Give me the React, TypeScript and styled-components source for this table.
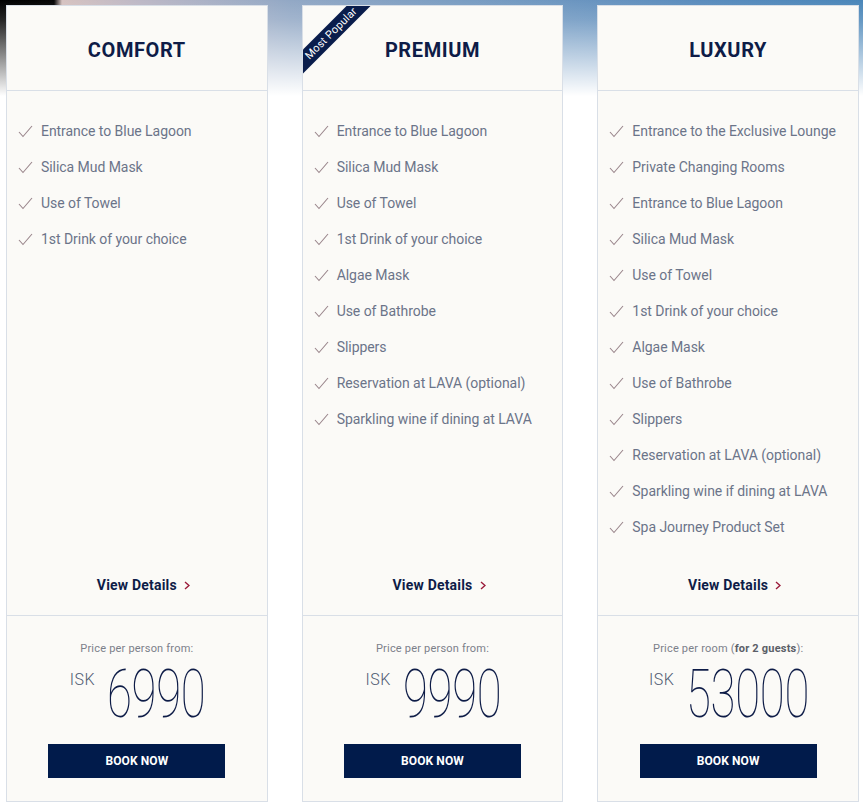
import React from 'react';
import styled, { createGlobalStyle } from 'styled-components';

const GlobalStyle = createGlobalStyle`
  html, body {
    margin: 0;
    padding: 0;
    background: #ffffff;
  }
  body {
    font-family: Roboto, 'Liberation Sans', sans-serif;
  }
`;

const Page = styled.div`
  width: 863px;
  height: 809px;
  box-sizing: border-box;
  padding: 5px 4px 0 6px;
  background-color: #ffffff;
  background-image:
    linear-gradient(to bottom, rgba(255, 255, 255, 0) 0px, rgba(255, 255, 255, 0.15) 20px, #ffffff 96px),
    linear-gradient(
      to right,
      #000000 0px,
      #050505 54px,
      #d6c2c0 62px,
      #bdb8c6 140px,
      #92a8c5 290px,
      #7299c1 520px,
      #5a8cbd 700px,
      #4a86b9 863px
    );
  background-size: 100% 100px, 100% 100px;
  background-repeat: no-repeat;
`;

const Grid = styled.div`
  display: grid;
  grid-template-columns: repeat(3, 1fr);
  column-gap: 34px;
  align-items: stretch;
`;

const Card = styled.div`
  position: relative;
  overflow: hidden;
  display: flex;
  flex-direction: column;
  background: #fbfaf7;
  border: 1px solid #d9dfe7;
`;

const Header = styled.div`
  height: 85px;
  box-sizing: border-box;
  padding-top: 4px;
  display: flex;
  align-items: center;
  justify-content: center;
  border-bottom: 1px solid #d9dfe7;
`;

const Title = styled.h2`
  margin: 0;
  font-family: Roboto, 'Liberation Sans', sans-serif;
  font-size: 20px;
  font-weight: 700;
  letter-spacing: 0.6px;
  color: #0e1c47;
`;

const Ribbon = styled.div`
  position: absolute;
  left: -32px;
  top: 19px;
  width: 120px;
  height: 17px;
  background: #0a1d4c;
  color: #ffffff;
  font-size: 11px;
  line-height: 17px;
  text-align: center;
  transform: rotate(-45deg);
  letter-spacing: 0.2px;
`;

const Body = styled.div`
  flex: 1;
  display: flex;
  flex-direction: column;
  border-bottom: 1px solid #d9dfe7;
`;

const FeatureList = styled.ul`
  flex: 1;
  list-style: none;
  margin: 0;
  padding: 22px 0 0 11px;
`;

const Feature = styled.li`
  display: flex;
  align-items: center;
  height: 36px;
  font-size: 14px;
  color: #6b7489;
  letter-spacing: -0.05px;
`;

const Check = styled.svg`
  width: 15px;
  height: 13px;
  margin-right: 8px;
  flex-shrink: 0;
`;

const DetailsRow = styled.div`
  height: 36px;
  margin: 22px 0 12px;
  display: flex;
  align-items: center;
  justify-content: center;
`;

const DetailsLink = styled.a`
  display: inline-flex;
  align-items: center;
  gap: 7px;
  font-size: 14px;
  font-weight: 700;
  color: #0e1c47;
  text-decoration: none;
  letter-spacing: 0.2px;
  cursor: pointer;
`;

const Chevron = styled.svg`
  width: 6px;
  height: 9px;
  margin-top: 1px;
  margin-right: -13px;
`;

const Footer = styled.div`
  height: 185px;
  box-sizing: border-box;
  padding: 26px 0 0;
  display: flex;
  flex-direction: column;
  align-items: center;
`;

const PriceLabel = styled.div`
  font-size: 11px;
  line-height: 14px;
  color: #7c808a;
  letter-spacing: 0.2px;

  b {
    font-weight: 700;
    color: #5b5f68;
  }
`;

const PriceRow = styled.div`
  margin-top: 4px;
  height: 66px;
  display: flex;
  align-items: flex-start;
  justify-content: center;
  gap: 12px;
`;

const Currency = styled.span`
  margin-top: 10px;
  font-size: 16px;
  font-weight: 300;
  color: #4f5a72;
  letter-spacing: 0.5px;
`;

const Amount = styled.span<{ $chars: number }>`
  display: inline-block;
  margin-top: 3px;
  font-size: 67px;
  line-height: 63px;
  font-weight: 100;
  color: #0e1c47;
  transform: scaleX(0.68);
  transform-origin: left center;
  margin-right: ${(p) => -p.$chars * 12}px;
  letter-spacing: -0.5px;
`;

const BookButton = styled.button`
  margin-top: 18px;
  width: 177px;
  height: 34px;
  border: none;
  background: #011b4b;
  color: #ffffff;
  font-family: Roboto, 'Liberation Sans', sans-serif;
  font-size: 12px;
  font-weight: 700;
  letter-spacing: 0.1px;
  cursor: pointer;
`;

type Plan = {
  name: string;
  popular?: boolean;
  features: string[];
  label: React.ReactNode;
  price: string;
};

const plans: Plan[] = [
  {
    name: 'COMFORT',
    features: ['Entrance to Blue Lagoon', 'Silica Mud Mask', 'Use of Towel', '1st Drink of your choice'],
    label: 'Price per person from:',
    price: '6990',
  },
  {
    name: 'PREMIUM',
    popular: true,
    features: [
      'Entrance to Blue Lagoon',
      'Silica Mud Mask',
      'Use of Towel',
      '1st Drink of your choice',
      'Algae Mask',
      'Use of Bathrobe',
      'Slippers',
      'Reservation at LAVA (optional)',
      'Sparkling wine if dining at LAVA',
    ],
    label: 'Price per person from:',
    price: '9990',
  },
  {
    name: 'LUXURY',
    features: [
      'Entrance to the Exclusive Lounge',
      'Private Changing Rooms',
      'Entrance to Blue Lagoon',
      'Silica Mud Mask',
      'Use of Towel',
      '1st Drink of your choice',
      'Algae Mask',
      'Use of Bathrobe',
      'Slippers',
      'Reservation at LAVA (optional)',
      'Sparkling wine if dining at LAVA',
      'Spa Journey Product Set',
    ],
    label: (
      <>
        Price per room (<b>for 2 guests</b>):
      </>
    ),
    price: '53000',
  },
];

const CheckIcon = () => (
  <Check viewBox="0 0 15 13" fill="none">
    <polyline points="1,7 5,11.5 14,1" stroke="#9a868c" strokeWidth="1.1" />
  </Check>
);

const PlanCard = ({ plan }: { plan: Plan }) => (
  <Card>
    {plan.popular && <Ribbon>Most Popular</Ribbon>}
    <Header>
      <Title>{plan.name}</Title>
    </Header>
    <Body>
      <FeatureList>
        {plan.features.map((f) => (
          <Feature key={f}>
            <CheckIcon />
            {f}
          </Feature>
        ))}
      </FeatureList>
      <DetailsRow>
        <DetailsLink>
          View Details
          <Chevron viewBox="0 0 6 9" fill="none">
            <polyline points="1,1 5,4.5 1,8" stroke="#9b1b3a" strokeWidth="1.4" />
          </Chevron>
        </DetailsLink>
      </DetailsRow>
    </Body>
    <Footer>
      <PriceLabel>{plan.label}</PriceLabel>
      <PriceRow>
        <Currency>ISK</Currency>
        <Amount $chars={plan.price.length}>{plan.price}</Amount>
      </PriceRow>
      <BookButton>BOOK NOW</BookButton>
    </Footer>
  </Card>
);

export default function App() {
  return (
    <>
      <GlobalStyle />
      <Page>
        <Grid>
          {plans.map((p) => (
            <PlanCard key={p.name} plan={p} />
          ))}
        </Grid>
      </Page>
    </>
  );
}
